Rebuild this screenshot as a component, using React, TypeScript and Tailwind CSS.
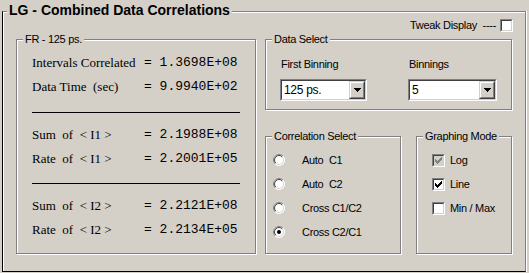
import React from 'react';

const SANS = "font-['Liberation_Sans',Arial,sans-serif]";

function GroupBox({ title, className, children }: { title: string; className?: string; children?: React.ReactNode }) {
  return (
    <div className={`relative border border-[#808080] shadow-[inset_1px_1px_0_#fff,1px_1px_0_#fff] ${className ?? ''}`}>
      <span className="absolute left-[6px] top-[-8px] bg-[#d4d0c8] px-[2px] text-[11px] leading-[14px] tracking-[-0.3px] text-black">
        {title}
      </span>
      {children}
    </div>
  );
}

// classic 13x13 sunken checkbox
function Check({ checked, disabled }: { checked?: boolean; disabled?: boolean }) {
  return (
    <span className="block h-[13px] w-[13px] shrink-0 border border-b-white border-l-[#808080] border-r-white border-t-[#808080]">
      <span
        className={`relative block h-full w-full border border-b-[#d4d0c8] border-l-[#404040] border-r-[#d4d0c8] border-t-[#404040] ${
          disabled ? 'bg-[#d4d0c8]' : 'bg-white'
        }`}
      >
        {checked && (
          <svg width="7" height="7" className="absolute left-[1px] top-[1px]" shapeRendering="crispEdges">
            <path
              d="M6 0h1v3h-1zM5 1h1v3h-1zM4 2h1v3h-1zM3 3h1v3h-1zM2 4h1v3h-1zM1 3h1v3h-1zM0 2h1v3h-1z"
              fill={disabled ? '#808080' : '#000'}
            />
          </svg>
        )}
      </span>
    </span>
  );
}

function Radio({ checked }: { checked?: boolean }) {
  return (
    <svg width="12" height="12" viewBox="0 0 12 12" className="shrink-0">
      <defs>
        <clipPath id="rtl">
          <polygon points="0,0 12,0 0,12" />
        </clipPath>
        <clipPath id="rbr">
          <polygon points="12,0 12,12 0,12" />
        </clipPath>
      </defs>
      <circle cx="6" cy="6" r="5.5" fill="#fff" />
      <circle cx="6" cy="6" r="5.5" fill="none" stroke="#808080" clipPath="url(#rtl)" />
      <circle cx="6" cy="6" r="5.5" fill="none" stroke="#fff" clipPath="url(#rbr)" />
      <circle cx="6" cy="6" r="4.5" fill="none" stroke="#404040" clipPath="url(#rtl)" />
      <circle cx="6" cy="6" r="4.5" fill="none" stroke="#d4d0c8" clipPath="url(#rbr)" />
      {checked && <circle cx="6" cy="6" r="2" fill="#000" />}
    </svg>
  );
}

function Select({ value, width }: { value: string; width: string }) {
  return (
    <div className={`h-[22px] ${width} border border-b-white border-l-[#808080] border-r-white border-t-[#808080]`}>
      <div className="flex h-full w-full items-center border border-b-[#d4d0c8] border-l-[#404040] border-r-[#d4d0c8] border-t-[#404040] bg-white">
        <span className="flex-1 pl-[2px] text-[12px] leading-[14px] tracking-[-0.3px]">{value}</span>
        <span className="flex h-full w-[16px] border border-b-[#404040] border-l-[#d4d0c8] border-r-[#404040] border-t-[#d4d0c8]">
          <span className="flex flex-1 items-center justify-center border border-b-[#808080] border-l-white border-r-[#808080] border-t-white bg-[#d4d0c8]">
            <svg width="7" height="4" shapeRendering="crispEdges">
              <path d="M0 0h7v1h-1v1h-1v1h-1v1h-1v-1h-1v-1h-1v-1h-1z" fill="#000" />
            </svg>
          </span>
        </span>
      </div>
    </div>
  );
}

const stats = [
  [
    ['Intervals Correlated', '1.3698E+08'],
    ['Data Time  (sec)', '9.9940E+02'],
  ],
  [
    ['Sum  of  < I1 >', '2.1988E+08'],
    ['Rate  of  < I1 >', '2.2001E+05'],
  ],
  [
    ['Sum  of  < I2 >', '2.2121E+08'],
    ['Rate  of  < I2 >', '2.2134E+05'],
  ],
];

export default function App() {
  return (
    <div className={`h-[273px] w-[529px] overflow-hidden bg-[#d4d0c8] pt-[11px] pl-[2px] text-black ${SANS}`}>
      {/* Outer group */}
      <div className="relative h-[261px] w-[524px] border border-b-black border-l-black border-r-[#808080] border-t-[#808080] shadow-[inset_1px_1px_0_#fff,1px_0_0_#fff]">
        <span className="absolute left-[4px] top-[-10px] bg-[#d4d0c8] px-[2px] text-[14px] font-bold leading-[16px]">
          LG - Combined Data Correlations
        </span>

        <div className="pl-[13px] pt-[7px]">
          {/* Tweak display */}
          <div className="flex w-[497px] items-center justify-end gap-[4px]">
            <span className="text-[11px] leading-[13px] tracking-[-0.3px] whitespace-pre">Tweak Display  ----</span>
            <Check />
          </div>

          <div className="mt-[7px] flex gap-[9px]">
            {/* FR panel */}
            <GroupBox title="FR - 125 ps." className="h-[215px] w-[240px]">
              <div className="pl-[15px] pt-[11px]">
                {stats.map((group, gi) => (
                  <div key={gi}>
                    {gi > 0 && <div className={`${gi === 1 ? 'mt-[13px]' : 'mt-[12px]'} mb-[10px] h-px w-[208px] bg-black`} />}
                    {group.map(([label, value]) => (
                      <div key={label} className="flex h-[24px] items-center">
                        <span className="w-[112px] whitespace-pre font-['Liberation_Serif','Times_New_Roman',serif] text-[13px]">
                          {label}
                        </span>
                        <span className="whitespace-pre font-['Liberation_Mono','Courier_New',monospace] text-[13px]">
                          = {value}
                        </span>
                      </div>
                    ))}
                  </div>
                ))}
              </div>
            </GroupBox>

            {/* Right column */}
            <div className="w-[247px]">
              <GroupBox title="Data Select" className="h-[71px] w-[247px]">
                <div className="flex pl-[14px] pt-[17px]">
                  <div className="w-[128px]">
                    <div className="pl-[1px] text-[11px] leading-[14px] tracking-[-0.3px]">First Binning</div>
                    <div className="mt-[8px]">
                      <Select value="125 ps." width="w-[87px]" />
                    </div>
                  </div>
                  <div>
                    <div className="pl-[1px] text-[11px] leading-[14px] tracking-[-0.3px]">Binnings</div>
                    <div className="mt-[8px]">
                      <Select value="5" width="w-[89px]" />
                    </div>
                  </div>
                </div>
              </GroupBox>

              <div className="mt-[26px] flex justify-between">
                <GroupBox title="Correlation Select" className="h-[118px] w-[136px]">
                  <div className="pl-[7px] pt-[11px]">
                    {[
                      ['Auto  C1', false],
                      ['Auto  C2', false],
                      ['Cross C1/C2', false],
                      ['Cross C2/C1', true],
                    ].map(([label, on]) => (
                      <div key={label as string} className="flex h-[24px] items-center gap-[17px]">
                        <Radio checked={on as boolean} />
                        <span className="whitespace-pre text-[11px] tracking-[-0.3px]">{label as string}</span>
                      </div>
                    ))}
                  </div>
                </GroupBox>

                <GroupBox title="Graphing  Mode" className="h-[118px] w-[96px]">
                  <div className="pl-[15px] pt-[11px]">
                    <div className="flex h-[24px] items-center gap-[5px]">
                      <Check checked disabled />
                      <span className="text-[11px] tracking-[-0.3px]">Log</span>
                    </div>
                    <div className="flex h-[24px] items-center gap-[5px]">
                      <Check checked />
                      <span className="text-[11px] tracking-[-0.3px]">Line</span>
                    </div>
                    <div className="flex h-[24px] items-center gap-[5px]">
                      <Check />
                      <span className="text-[11px] tracking-[-0.3px]">Min / Max</span>
                    </div>
                  </div>
                </GroupBox>
              </div>
            </div>
          </div>
        </div>
      </div>
    </div>
  );
}
